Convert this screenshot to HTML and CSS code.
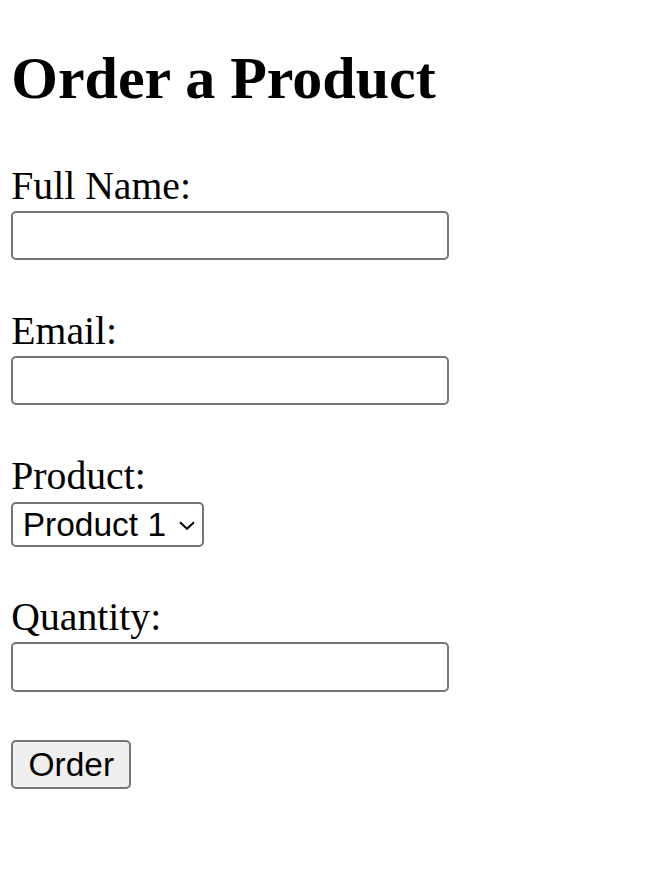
FILE: index.html
```html
<!DOCTYPE html>
<html>
<head>
<meta charset="utf-8">
<title>Order a Product</title>
<link rel="stylesheet" href="styles.css">
</head>
<body>
<div class="page">
  <h2 class="title">Order a Product</h2>
  <form class="order-form">
    <label class="field-label" for="name">Full Name:</label>
    <input class="text-input" id="name" type="text">
    <label class="field-label" for="email">Email:</label>
    <input class="text-input" id="email" type="email">
    <label class="field-label" for="product">Product:</label>
    <span class="select-wrap">
      <select class="select" id="product">
        <option>Product 1</option>
        <option>Product 2</option>
        <option>Product 3</option>
      </select>
      <svg class="chevron" width="16" height="9" viewBox="0 0 16 9"><path d="M1 1.2 L8 7.8 L15 1.2" fill="none" stroke="#000" stroke-width="2"/></svg>
    </span>
    <label class="field-label qty-label" for="qty">Quantity:</label>
    <input class="text-input" id="qty" type="number">
    <button class="btn" type="button">Order</button>
  </form>
</div>
</body>
</html>
```

FILE: styles.css
```css
html, body {
  margin: 0;
  padding: 0;
  background: #fff;
}
.page {
  padding: 0 11.3px;
  font-family: "Liberation Serif", "Times New Roman", serif;
  color: #000;
}
.title {
  margin: 45px 0 0;
  font-size: 60px;
  line-height: 66px;
  font-weight: bold;
}
.order-form {
  display: flex;
  flex-direction: column;
  align-items: flex-start;
}
.field-label {
  display: block;
  font-size: 39.7px;
  line-height: 44px;
  margin-top: 48.6px;
}
.field-label:first-child {
  margin-top: 52.7px;
}
.qty-label {
  margin-top: 48px;
}
.text-input {
  box-sizing: border-box;
  width: 438px;
  height: 49.6px;
  margin: 3px 0 0;
  border: 2px solid #767676;
  border-radius: 5px;
  background: #fff;
  padding: 0 5px;
  font-family: "Liberation Sans", Arial, sans-serif;
  font-size: 33px;
}
.text-input::-webkit-outer-spin-button,
.text-input::-webkit-inner-spin-button {
  -webkit-appearance: none;
  margin: 0;
}
.select-wrap {
  position: relative;
  display: block;
  margin-top: 4.3px;
}
.select {
  -webkit-appearance: none;
  appearance: none;
  box-sizing: border-box;
  width: 193px;
  height: 45px;
  margin: 0;
  padding: 0 0 0 9.4px;
  border: 2px solid #767676;
  border-radius: 5px;
  background: #fff;
  color: #000;
  font-family: "Liberation Sans", Arial, sans-serif;
  font-size: 33.5px;
  line-height: 41px;
}
.chevron {
  position: absolute;
  left: 168px;
  top: 18.5px;
  pointer-events: none;
}
.btn {
  box-sizing: border-box;
  width: 120px;
  height: 49.3px;
  margin-top: 48.2px;
  padding: 0;
  border: 2px solid #767676;
  border-radius: 5px;
  background: #efefef;
  color: #000;
  font-family: "Liberation Sans", Arial, sans-serif;
  font-size: 33.5px;
  line-height: 45px;
}
```
